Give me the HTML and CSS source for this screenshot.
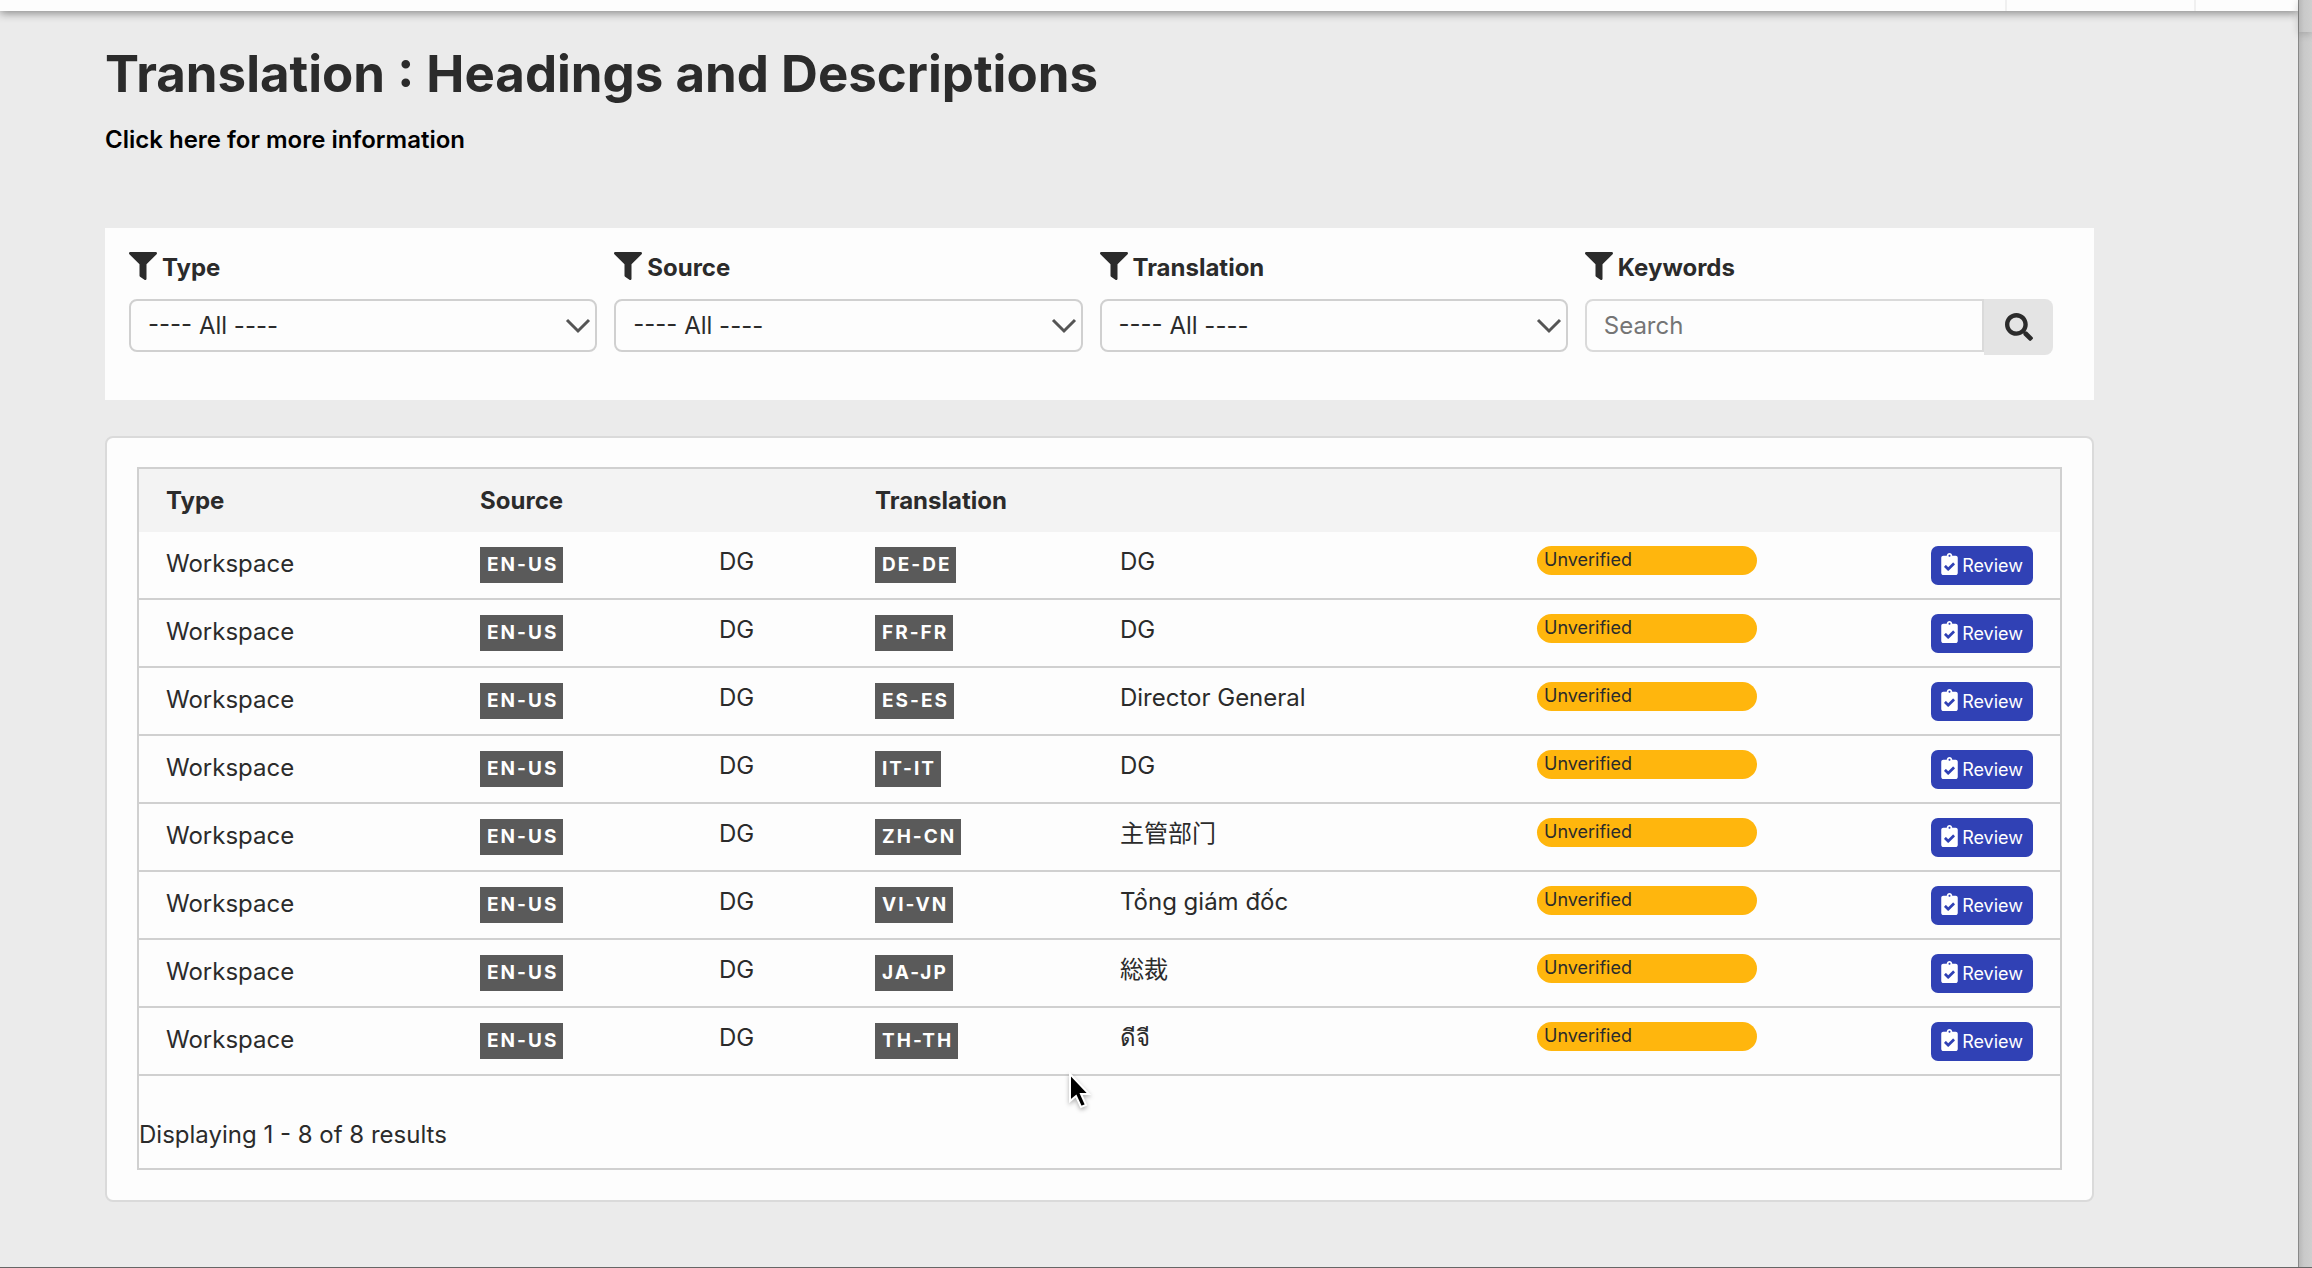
FILE: index.html
```
<!DOCTYPE html>
<html lang="en">
<head>
  <meta charset="utf-8">
  <title>Translation : Headings and Descriptions</title>
  <link rel="stylesheet" href="styles.css">
</head>
<body>
  <svg class="sprite" aria-hidden="true">
    <symbol id="filter" viewBox="0 0 512 512"><path d="M487.976 0H24.028C2.71 0-8.047 25.866 7.058 40.971L192 225.941V432c0 7.831 3.821 15.17 10.237 19.662l80 55.98C298.02 518.69 320 507.493 320 487.98V225.941l184.947-184.97C520.021 25.896 509.338 0 487.976 0z"/></symbol>
    <symbol id="search" viewBox="0 0 512 512"><path d="M505 442.7L405.3 343c-4.5-4.5-10.6-7-17-7H372c27.6-35.3 44-79.7 44-128C416 93.1 322.9 0 208 0S0 93.1 0 208s93.1 208 208 208c48.3 0 92.7-16.4 128-44v16.3c0 6.4 2.5 12.5 7 17l99.7 99.7c9.4 9.4 24.6 9.4 33.9 0l28.3-28.3c9.4-9.4 9.4-24.6.1-34zM208 336c-70.7 0-128-57.2-128-128 0-70.7 57.2-128 128-128 70.7 0 128 57.2 128 128 0 70.7-57.2 128-128 128z"/></symbol>
    <symbol id="check" viewBox="0 0 384 512"><path d="M336 64h-80c0-35.3-28.7-64-64-64s-64 28.7-64 64H48C21.5 64 0 85.5 0 112v352c0 26.5 21.5 48 48 48h288c26.5 0 48-21.5 48-48V112c0-26.5-21.5-48-48-48zM192 40c13.3 0 24 10.7 24 24s-10.7 24-24 24-24-10.7-24-24 10.7-24 24-24zm121.2 231.8l-143 141.8c-4.7 4.7-12.3 4.6-17-.1l-82.6-83.3c-4.7-4.7-4.6-12.3.1-17L99.1 285c4.7-4.7 12.3-4.6 17 .1l46 46.4 106-105.2c4.7-4.7 12.3-4.6 17 .1l28.2 28.4c4.7 4.8 4.6 12.3-.1 17z"/></symbol>
    <symbol id="chevron" viewBox="0 0 26 16"><path d="M2 2l11 11L24 2" fill="none" stroke="#555" stroke-width="3"/></symbol>
  </svg>

  <div class="page">
    <div class="topbar"><span class="topbar-item"></span><span class="topbar-end"></span></div>

    <main class="content">
      <h1>Translation : Headings and Descriptions</h1>
      <a class="info-link" href="#">Click here for more information</a>

      <form class="filters">
        <div class="filter">
          <label for="type"><svg class="icon"><use href="#filter"/></svg>Type</label>
          <div class="select">
            <select id="type"><option>---- All ----</option></select>
            <svg class="chevron"><use href="#chevron"/></svg>
          </div>
        </div>
        <div class="filter">
          <label for="source"><svg class="icon"><use href="#filter"/></svg>Source</label>
          <div class="select">
            <select id="source"><option>---- All ----</option></select>
            <svg class="chevron"><use href="#chevron"/></svg>
          </div>
        </div>
        <div class="filter">
          <label for="translation"><svg class="icon"><use href="#filter"/></svg>Translation</label>
          <div class="select">
            <select id="translation"><option>---- All ----</option></select>
            <svg class="chevron"><use href="#chevron"/></svg>
          </div>
        </div>
        <div class="filter">
          <label for="keywords"><svg class="icon"><use href="#filter"/></svg>Keywords</label>
          <div class="search">
            <input id="keywords" type="text" placeholder="Search">
            <button type="button" aria-label="Search"><svg class="icon"><use href="#search"/></svg></button>
          </div>
        </div>
      </form>

      <div class="card">
        <div class="results">
          <table>
            <colgroup>
              <col class="col-type"><col class="col-source"><col class="col-text"><col class="col-lang"><col class="col-value"><col class="col-status"><col class="col-action">
            </colgroup>
            <thead>
              <tr><th>Type</th><th>Source</th><th></th><th>Translation</th><th></th><th></th><th></th></tr>
            </thead>
            <tbody>
              <tr>
                <td>Workspace</td>
                <td class="lang"><span class="badge">EN-US</span></td><td class="text">DG</td>
                <td class="lang"><span class="badge">DE-DE</span></td><td class="text">DG</td>
                <td><div class="status">Unverified</div></td>
                <td><button class="review" type="button"><svg><use href="#check"/></svg>Review</button></td>
              </tr>
              <tr>
                <td>Workspace</td>
                <td class="lang"><span class="badge">EN-US</span></td><td class="text">DG</td>
                <td class="lang"><span class="badge">FR-FR</span></td><td class="text">DG</td>
                <td><div class="status">Unverified</div></td>
                <td><button class="review" type="button"><svg><use href="#check"/></svg>Review</button></td>
              </tr>
              <tr>
                <td>Workspace</td>
                <td class="lang"><span class="badge">EN-US</span></td><td class="text">DG</td>
                <td class="lang"><span class="badge">ES-ES</span></td><td class="text">Director General</td>
                <td><div class="status">Unverified</div></td>
                <td><button class="review" type="button"><svg><use href="#check"/></svg>Review</button></td>
              </tr>
              <tr>
                <td>Workspace</td>
                <td class="lang"><span class="badge">EN-US</span></td><td class="text">DG</td>
                <td class="lang"><span class="badge">IT-IT</span></td><td class="text">DG</td>
                <td><div class="status">Unverified</div></td>
                <td><button class="review" type="button"><svg><use href="#check"/></svg>Review</button></td>
              </tr>
              <tr>
                <td>Workspace</td>
                <td class="lang"><span class="badge">EN-US</span></td><td class="text">DG</td>
                <td class="lang"><span class="badge">ZH-CN</span></td><td class="text" lang="zh-CN">主管部门</td>
                <td><div class="status">Unverified</div></td>
                <td><button class="review" type="button"><svg><use href="#check"/></svg>Review</button></td>
              </tr>
              <tr>
                <td>Workspace</td>
                <td class="lang"><span class="badge">EN-US</span></td><td class="text">DG</td>
                <td class="lang"><span class="badge">VI-VN</span></td><td class="text" lang="vi">Tổng giám đốc</td>
                <td><div class="status">Unverified</div></td>
                <td><button class="review" type="button"><svg><use href="#check"/></svg>Review</button></td>
              </tr>
              <tr>
                <td>Workspace</td>
                <td class="lang"><span class="badge">EN-US</span></td><td class="text">DG</td>
                <td class="lang"><span class="badge">JA-JP</span></td><td class="text japanese" lang="ja">総裁</td>
                <td><div class="status">Unverified</div></td>
                <td><button class="review" type="button"><svg><use href="#check"/></svg>Review</button></td>
              </tr>
              <tr>
                <td>Workspace</td>
                <td class="lang"><span class="badge">EN-US</span></td><td class="text">DG</td>
                <td class="lang"><span class="badge">TH-TH</span></td><td class="text" lang="th">ดีจี</td>
                <td><div class="status">Unverified</div></td>
                <td><button class="review" type="button"><svg><use href="#check"/></svg>Review</button></td>
              </tr>
            </tbody>
          </table>
          <p class="summary">Displaying 1 - 8 of 8 results</p>
        </div>
      </div>
    </main>
  </div>
  <div class="edge"><div class="edge-top"></div></div>

  <svg class="cursor" viewBox="0 0 24 38"><path d="M2 2v27l6-5 5 11 5-2-5-11h8z" fill="#000" stroke="#fff" stroke-width="2"/></svg>
</body>
</html>
```
FILE: styles.css
```
* {
  box-sizing: border-box;
}

body {
  display: flex;
  min-height: 100vh;
  margin: 0;
  border-bottom: 1px solid #666;
  background-color: #ebebeb;
  color: #2b2b2b;
  font-family: Inter, "Noto Sans CJK SC", sans-serif;
  font-size: 24px;
  line-height: 36px;
}

.sprite {
  position: absolute;
  width: 0;
  height: 0;
}

.page {
  flex: 1;
}

.topbar {
  display: flex;
  justify-content: flex-end;
  height: 11px;
  background-color: #fdfdfd;
  box-shadow: 0 2px 10px rgba(0, 0, 0, 0.45);
}

.topbar-item,
.topbar-end {
  border-left: 2px solid #f0f0f0;
}

.topbar-item {
  width: 189px;
}

.topbar-end {
  width: 104px;
}

.edge {
  width: 14px;
  border-left: 1px solid #888;
  background: linear-gradient(to right, #b8b8b8, #c9c9c9 5px, #cfcfcf);
}

.edge-top {
  height: 32px;
  box-shadow: 0 2px 8px rgba(0, 0, 0, 0.2);
}

.content {
  padding: 32px 204px 60px 105px;
}

h1 {
  margin: 0 0 17px;
  font-size: 51px;
  font-weight: 700;
  line-height: 62px;
}

.info-link {
  display: block;
  margin-bottom: 70px;
  color: #000;
  font-weight: 600;
  text-decoration: none;
}

.filters {
  display: grid;
  grid-template-columns: repeat(4, 1fr);
  gap: 17px;
  margin-bottom: 36px;
  padding: 22px 41px 45px 24px;
  background-color: #fdfdfd;
}

.filter label {
  display: flex;
  gap: 5px;
  margin-bottom: 13px;
  font-weight: 700;
}

.icon {
  width: 28px;
  height: 28px;
  fill: #2b2b2b;
}

.filter label .icon {
  margin-top: 2px;
}

.select {
  position: relative;
}

select,
input {
  display: block;
  width: 100%;
  height: 53px;
  padding: 0 17px;
  border: 2px solid #d0d0d0;
  border-radius: 8px;
  background-color: #fdfdfd;
  color: #2b2b2b;
  font: inherit;
  appearance: none;
}

.chevron {
  position: absolute;
  top: 19px;
  right: 6px;
  width: 26px;
  height: 16px;
  pointer-events: none;
}

.search {
  display: flex;
  align-items: flex-start;
}

.search input {
  flex: 1;
  min-width: 0;
  border-color: #dadada;
  border-radius: 8px 0 0 8px;
}

.search input::placeholder {
  color: #757575;
}

.search button {
  display: flex;
  align-items: center;
  justify-content: center;
  width: 69px;
  height: 56px;
  padding: 0;
  border: 0;
  border-radius: 0 8px 8px 0;
  background-color: #e4e4e4;
}

.card {
  padding: 29px 30px 30px;
  border: 2px solid #dadada;
  border-radius: 8px;
  background-color: #fdfdfd;
}

.results {
  border: 2px solid #d0d0d0;
}

table {
  width: 100%;
  border-spacing: 0;
  table-layout: fixed;
}

.col-type { width: 16.35%; }
.col-source { width: 12.44%; }
.col-text { width: 8.12%; }
.col-lang { width: 12.75%; }
.col-value { width: 21.71%; }
.col-status { width: 14.26%; }
.col-action { width: 14.37%; }

th {
  padding: 14px 27px 13px;
  background-color: #f3f3f3;
  font-weight: 700;
  text-align: left;
}

td {
  height: 68px;
  padding: 14px 27px 0;
  border-bottom: 2px solid #d0d0d0;
  vertical-align: top;
}

.lang {
  padding-top: 15px;
}

.text {
  line-height: 32px;
}

.japanese {
  font-family: Inter, "Noto Sans CJK JP", sans-serif;
}

.badge {
  display: inline-block;
  padding: 0 5px 0 7px;
  background-color: #5a5a5a;
  color: #fff;
  font-size: 19px;
  font-weight: 700;
  letter-spacing: 2px;
  vertical-align: top;
}

.status {
  height: 29px;
  padding-left: 7px;
  border-radius: 15px;
  background-color: #ffb60d;
  font-size: 18px;
  line-height: 28px;
}

.review {
  display: flex;
  align-items: center;
  gap: 4px;
  height: 39px;
  margin-left: auto;
  padding: 0 10px;
  border: 0;
  border-radius: 7px;
  background-color: #3041b5;
  color: #fff;
  font: inherit;
  font-size: 18px;
}

.review svg {
  width: 17px;
  height: 22px;
  margin-bottom: 3px;
  fill: #fff;
}

.summary {
  margin: 0;
  padding: 41px 0 15px;
}

/* mouse pointer over the page */
.cursor {
  position: absolute;
  left: 1068px;
  top: 1072px;
  width: 24px;
  height: 38px;
  filter: drop-shadow(0 2px 2px rgba(0, 0, 0, 0.3));
}
```
